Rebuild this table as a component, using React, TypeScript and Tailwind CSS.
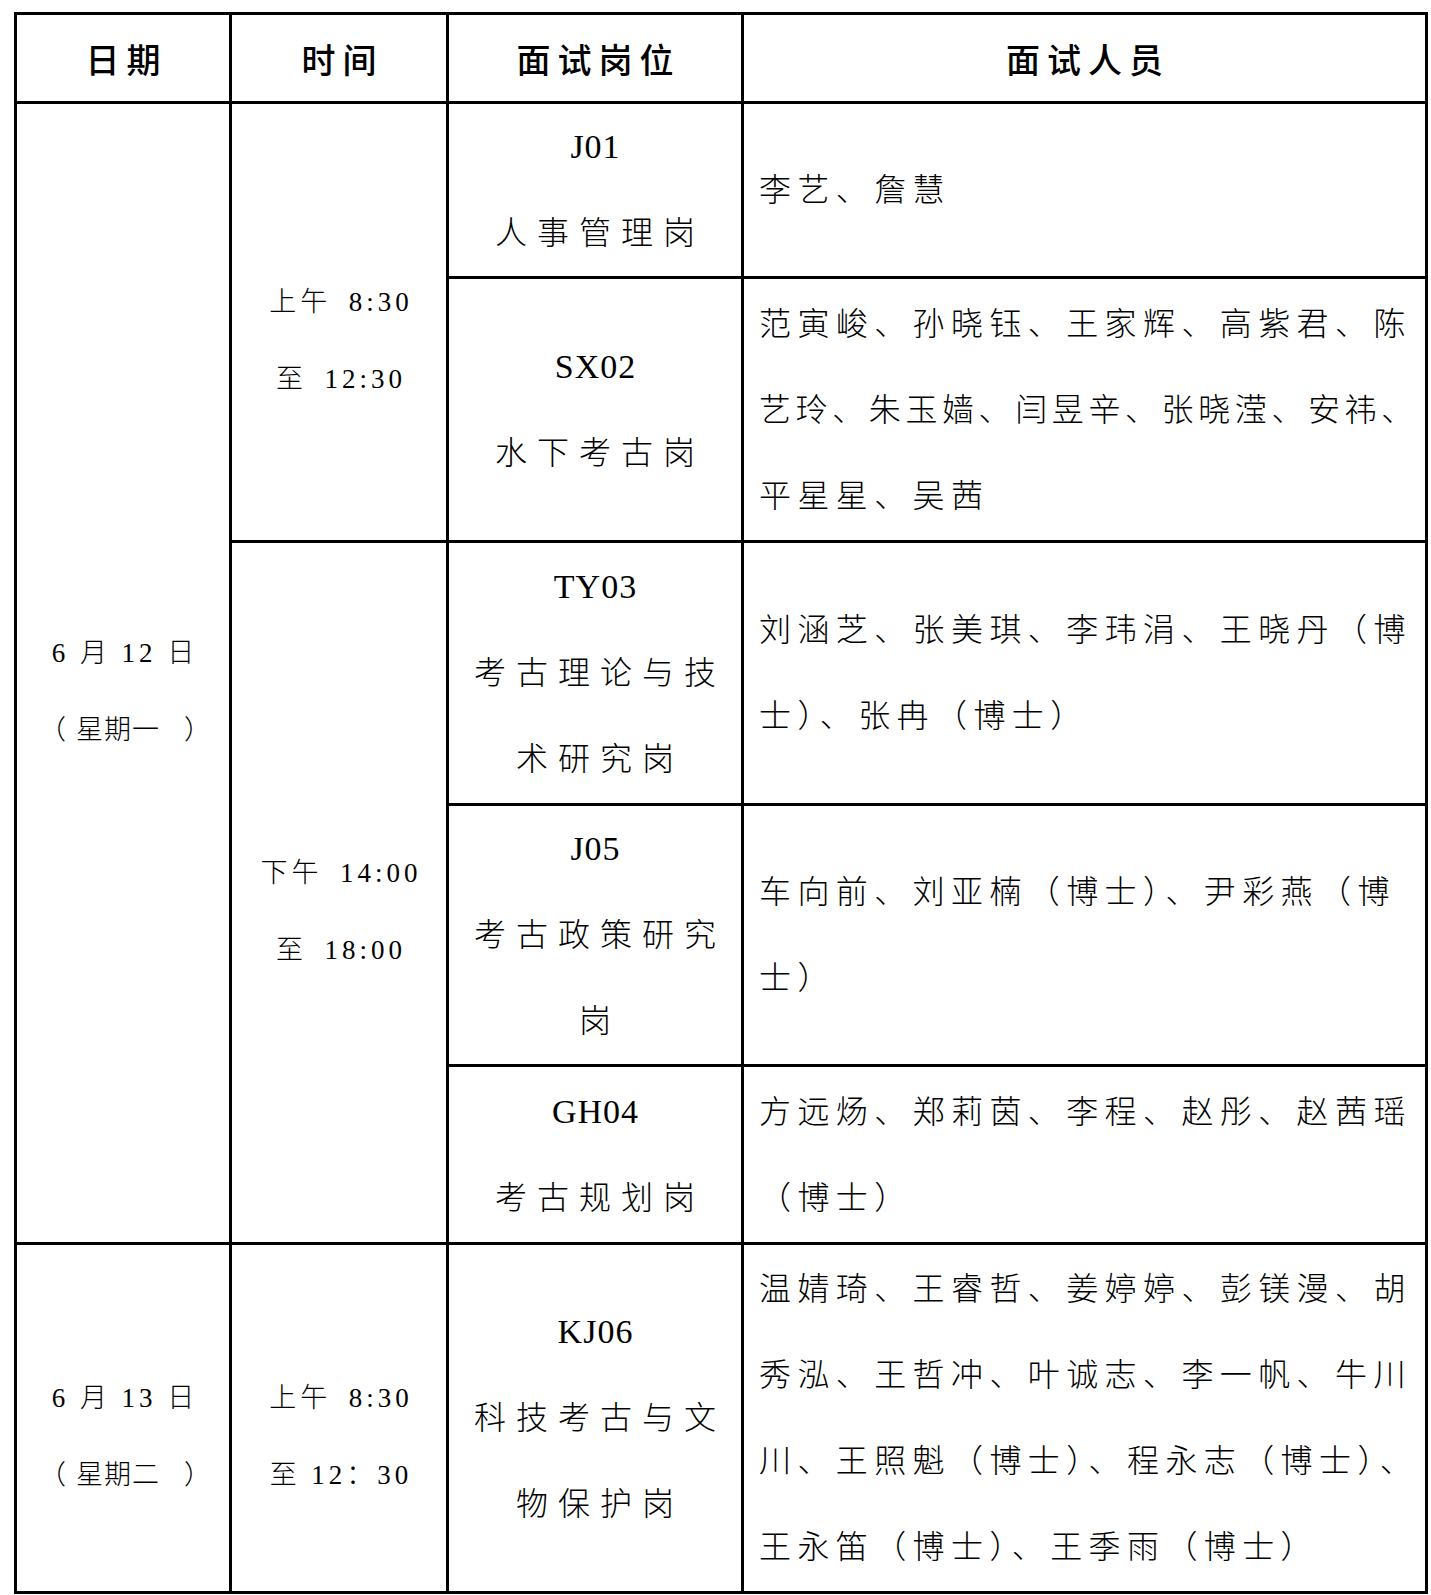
import React from 'react';

const body = "font-['Liberation_Serif','Noto_Sans_CJK_SC',serif] font-light text-black";
const head = "font-['Noto_Sans_CJK_SC',sans-serif] font-medium text-black";

// column 1 / 2 : date and time, sits a little below the middle like the original doc
const TimeCell: React.FC<{ lines: React.ReactNode[]; className: string }> = ({ lines, className }) => (
  <div className={`bg-white flex flex-col items-center justify-center pt-[38px] ${className}`}>
    {lines.map((line, i) => (
      <div key={i} className={`${body} text-[27px] leading-[77px] tracking-[4px] pl-[4px] whitespace-nowrap`}>
        {line}
      </div>
    ))}
  </div>
);

// weekday line, the brackets stand apart from the word
const Weekday: React.FC<{ day: string }> = ({ day }) => (
  <span className="flex items-center tracking-normal">
    <span>（</span>
    <span className="ml-[10px] mr-[24px] tracking-[1px]">{day}</span>
    <span>）</span>
  </span>
);

// column 3 : post code on top, post name below
const PostCell: React.FC<{ code: string; name: string[]; className: string }> = ({ code, name, className }) => (
  <div className={`bg-white flex flex-col items-center justify-center ${className}`}>
    <div className={`${body} text-[34px] leading-[86px] tracking-[1px] pl-[1px]`}>{code}</div>
    {name.map(line => (
      <div key={line} className={`${body} text-[32px] leading-[86px] tracking-[10px] pl-[10px] whitespace-nowrap`}>
        {line}
      </div>
    ))}
  </div>
);

// column 4 : names, left aligned, one div per printed line
// a line can carry its own tracking when it holds one more glyph than the rest
type NameLine = string | [string, string];

const NameCell: React.FC<{ lines: NameLine[]; className: string }> = ({ lines, className }) => (
  <div className={`bg-white flex flex-col justify-center pl-[15px] ${className}`}>
    {lines.map(item => {
      const [text, tracking] = typeof item === 'string' ? [item, 'tracking-[6.4px]'] : item;
      return (
        <div key={text} className={`${body} text-[32px] leading-[86px] ${tracking} whitespace-nowrap`}>
          {text}
        </div>
      );
    })}
  </div>
);

const HeadCell: React.FC<{ label: string; className: string }> = ({ label, className }) => (
  <div className={`bg-white flex items-center justify-center ${className}`}>
    <span className={`${head} text-[34px] tracking-[7px] pl-[7px]`}>{label}</span>
  </div>
);

export default function App() {
  return (
    <div className="min-h-[1595px] bg-white pt-[12px] pl-[14px]">
      <div className="grid w-[1414px] grid-cols-[212px_214px_292px_681px] grid-rows-[86px_172px_261px_260px_258px_175px_346px] gap-[3px] bg-black p-[3px]">
        {/* Header */}
        <HeadCell label="日期" className="col-start-1 row-start-1" />
        <HeadCell label="时间" className="col-start-2 row-start-1" />
        <HeadCell label="面试岗位" className="col-start-3 row-start-1" />
        <HeadCell label="面试人员" className="col-start-4 row-start-1" />

        {/* 6月12日 */}
        <TimeCell lines={['6 月 12 日', <Weekday day="星期一" />]} className="col-start-1 row-start-2 row-span-5" />
        <TimeCell lines={['上午\u20028:30', '至\u200212:30']} className="col-start-2 row-start-2 row-span-2" />
        <TimeCell lines={['下午\u200214:00', '至\u200218:00']} className="col-start-2 row-start-4 row-span-3" />

        <PostCell code="J01" name={['人事管理岗']} className="col-start-3 row-start-2" />
        <NameCell lines={['李艺、詹慧']} className="col-start-4 row-start-2" />

        <PostCell code="SX02" name={['水下考古岗']} className="col-start-3 row-start-3" />
        <NameCell
          lines={[
            '范寅峻、孙晓钰、王家辉、高紫君、陈',
            ['艺玲、朱玉嫱、闫昱辛、张晓滢、安祎、', 'tracking-[4.6px]'],
            '平星星、吴茜',
          ]}
          className="col-start-4 row-start-3"
        />

        <PostCell code="TY03" name={['考古理论与技', '术研究岗']} className="col-start-3 row-start-4" />
        <NameCell lines={['刘涵芝、张美琪、李玮涓、王晓丹（博', '士）、张冉（博士）']} className="col-start-4 row-start-4" />

        <PostCell code="J05" name={['考古政策研究', '岗']} className="col-start-3 row-start-5" />
        <NameCell lines={['车向前、刘亚楠（博士）、尹彩燕（博', '士）']} className="col-start-4 row-start-5" />

        <PostCell code="GH04" name={['考古规划岗']} className="col-start-3 row-start-6" />
        <NameCell lines={['方远炀、郑莉茵、李程、赵彤、赵茜瑶', '（博士）']} className="col-start-4 row-start-6" />

        {/* 6月13日 */}
        <TimeCell lines={['6 月 13 日', <Weekday day="星期二" />]} className="col-start-1 row-start-7" />
        <TimeCell lines={['上午\u20028:30', '至 12：30']} className="col-start-2 row-start-7" />
        <PostCell code="KJ06" name={['科技考古与文', '物保护岗']} className="col-start-3 row-start-7" />
        <NameCell
          lines={[
            '温婧琦、王睿哲、姜婷婷、彭镁漫、胡',
            '秀泓、王哲冲、叶诚志、李一帆、牛川',
            '川、王照魁（博士）、程永志（博士）、',
            '王永笛（博士）、王季雨（博士）',
          ]}
          className="col-start-4 row-start-7"
        />
      </div>
    </div>
  );
}
